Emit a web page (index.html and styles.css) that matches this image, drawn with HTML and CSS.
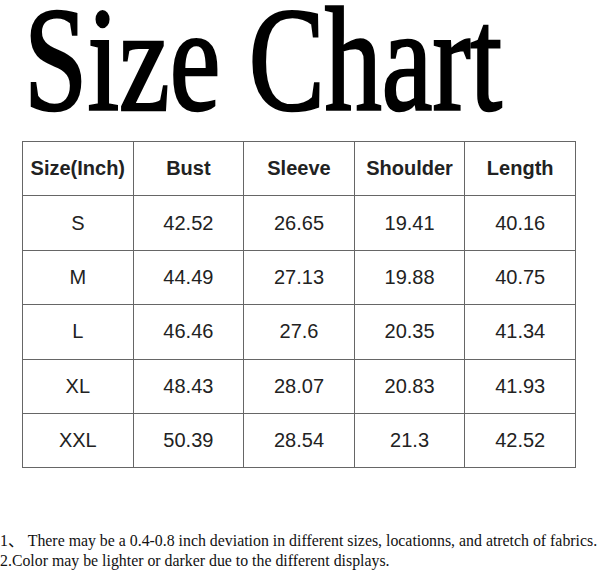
FILE: index.html
```html
<!DOCTYPE html>
<html>
<head>
<meta charset="utf-8">
<link rel="stylesheet" href="styles.css">
</head>
<body>
<div class="page">
  <h1 class="title"><span class="title-text">Size Chart</span></h1>
  <table class="chart">
    <thead>
      <tr><th>Size(Inch)</th><th>Bust</th><th>Sleeve</th><th>Shoulder</th><th>Length</th></tr>
    </thead>
    <tbody>
      <tr><td>S</td><td>42.52</td><td>26.65</td><td>19.41</td><td>40.16</td></tr>
      <tr><td>M</td><td>44.49</td><td>27.13</td><td>19.88</td><td>40.75</td></tr>
      <tr><td>L</td><td>46.46</td><td>27.6</td><td>20.35</td><td>41.34</td></tr>
      <tr><td>XL</td><td>48.43</td><td>28.07</td><td>20.83</td><td>41.93</td></tr>
      <tr><td>XXL</td><td>50.39</td><td>28.54</td><td>21.3</td><td>42.52</td></tr>
    </tbody>
  </table>
  <div class="notes">
    <p>1、 There may be a 0.4-0.8 inch deviation in different sizes, locationns, and atretch of fabrics.</p>
    <p>2.Color may be lighter or darker due to the different displays.</p>
  </div>
</div>
</body>
</html>
```
FILE: styles.css
```css
html, body {
  margin: 0;
  padding: 0;
  background: #fff;
}
.page {
  width: 600px;
  height: 572px;
  overflow: hidden;
}
.title {
  margin: 0;
  height: 141px;
  box-sizing: border-box;
  padding: 5px 0 0 24px;
  font-family: "Liberation Serif", "Times New Roman", serif;
  font-weight: normal;
  font-size: 114px;
  line-height: normal;
  color: #000;
  white-space: nowrap;
}
.title-text {
  display: inline-block;
  transform: scaleY(1.3);
  transform-origin: 0 101.6px;
  -webkit-text-stroke: 2px #000;
}
.chart {
  margin-left: 22px;
  width: 554px;
  border-collapse: collapse;
  table-layout: fixed;
  font-family: "Liberation Sans", Arial, sans-serif;
  font-size: 20px;
  color: #222;
}
.chart th, .chart td {
  border: 1px solid #666;
  height: 53.4px;
  padding: 0;
  text-align: center;
  vertical-align: middle;
}
.chart th {
  font-weight: bold;
}
.notes {
  margin-top: 63px;
  font-family: "Liberation Serif", "Noto Sans CJK SC", serif;
  font-size: 15.85px;
  line-height: 20px;
  color: #111;
  white-space: nowrap;
}
.notes p {
  margin: 0;
}
```
